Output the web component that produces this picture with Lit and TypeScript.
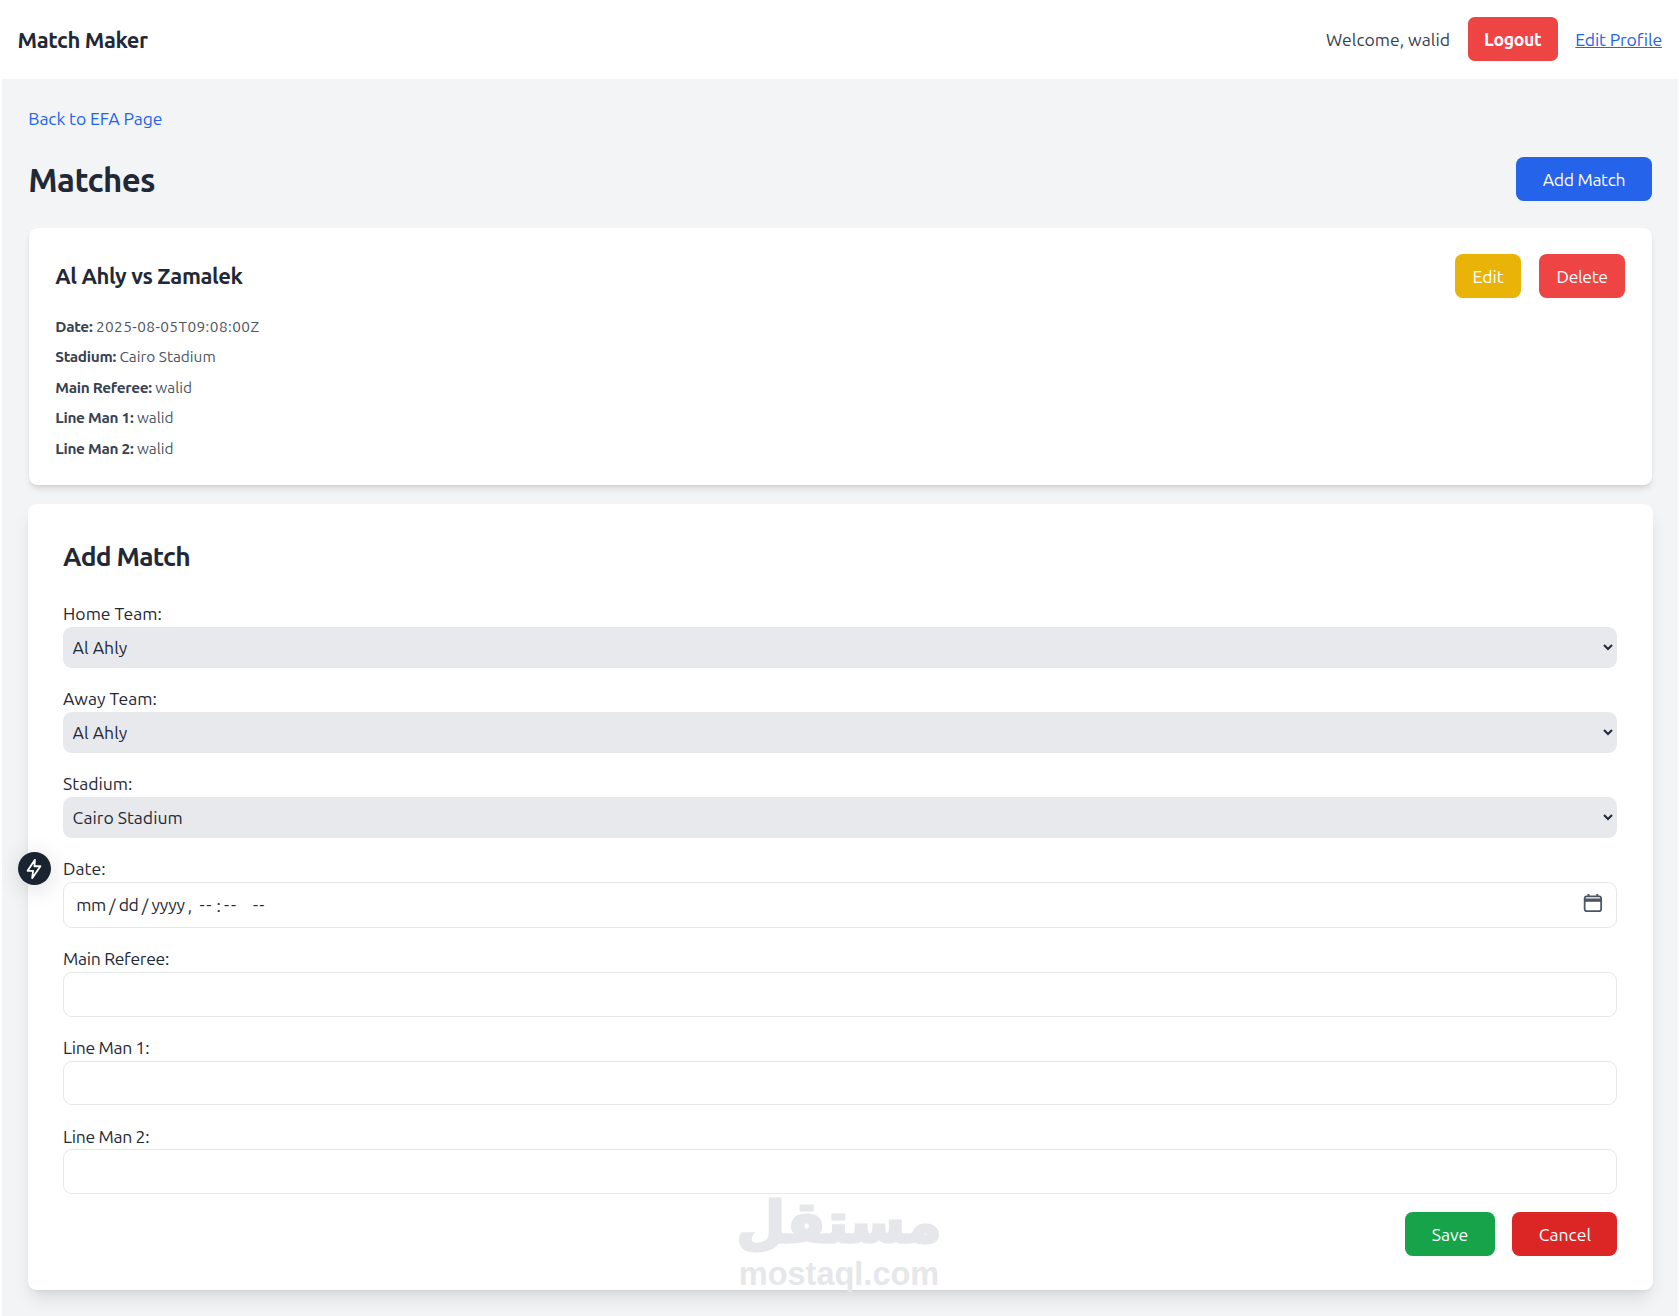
import { LitElement, html, css } from "lit";
import { customElement } from "lit/decorators.js";

@customElement("app-root")
export class AppRoot extends LitElement {
  static styles = css`
    :host { display: block; position: relative; background: #fff; font-family: "Ubuntu", "Noto Sans", sans-serif; color: #1f2937; }
    * { box-sizing: border-box; }
    .scaled { zoom: 1.1; font-size: 16px; line-height: 24px; }
    header { display: flex; align-items: center; justify-content: space-between; height: 72px; padding: 1px 15.5px 0 16px; background: #fff; }
    .logo { font-size: 20px; font-weight: 600; line-height: 28px; letter-spacing: -0.018em; color: #1f2937; }
    .user { display: flex; align-items: center; gap: 16px; color: #374151; }
    .btn { display: inline-block; border: none; border-radius: 6px; height: 40px; padding: 1px 16px 0; font: inherit; color: #fff; cursor: pointer; }
    .logout { margin-top: -2px; padding: 2px 15px 0; letter-spacing: -0.3px; }
    .wide { padding: 1px 24px 0; }
    .tight { letter-spacing: -0.3px; }
    .round { border-radius: 7px; }
    .bold { font-weight: 700; }
    .red { background: #ef4444; }
    .blue { background: #2563eb; }
    .yellow { background: #eab308; }
    .green { background: #16a34a; }
    .crimson { background: #dc2626; }
    .profile { color: #2563eb; text-decoration: underline; letter-spacing: -0.15px; }
    main { margin: 0 0.9px 0 1.8px; padding: 24px 24px 24px 24.5px; background: #f3f4f6; }
    .back { display: block; margin-left: -0.5px; color: #2563eb; text-decoration: none; margin-bottom: 23px; letter-spacing: -0.1px; }
    .row { display: flex; align-items: center; justify-content: space-between; }
    .title-row { margin-bottom: 24px; }
    h1 { margin: 0 0 0 -0.5px; padding-top: 1px; font-size: 30px; line-height: 35px; font-weight: 600; letter-spacing: -0.019em; color: #1f2937; }
    .card { background: #fff; border-radius: 8px; box-shadow: 0 4px 6px -1px rgba(0,0,0,.1), 0 2px 4px -2px rgba(0,0,0,.1); padding: 24px; margin-bottom: 17px; }
    .card-head { margin-bottom: 16px; }
    .actions .btn { padding-top: 2px; }
    h2 { margin: 0; font-size: 20px; line-height: 28px; font-weight: 600; letter-spacing: -0.018em; color: #1f2937; }
    .actions { display: flex; gap: 16px; }
    .detail { margin: 0 0 7.75px; font-size: 14px; line-height: 20px; color: #4b5563; }
    .detail:last-child { margin-bottom: -1px; }
    .detail b { font-weight: 600; letter-spacing: -0.02em; color: #374151; }
    .stamp { letter-spacing: 0.38px; }
    .form-card { margin: 0 -0.9px; padding: 32px 32px 31px; background: #fff; border-radius: 8px; box-shadow: 0 10px 15px -3px rgba(0,0,0,.1), 0 4px 6px -4px rgba(0,0,0,.1); }
    h3 { margin: 0 0 24px; font-size: 24px; line-height: 32px; font-weight: 600; letter-spacing: -0.027em; color: #1f2937; }
    .field { margin-bottom: 16px; }
    label { display: block; padding-top: 0.8px; height: 24px; color: #1f2937; }
    .narrow label { letter-spacing: -0.3px; }
    select, input { display: block; width: 100%; font: inherit; color: #1f2937; border-radius: 8px; }
    select { height: 37.2px; padding: 8px 11px 8px 5px; background: #e8e9ed; border: none; }
    input { height: 40.8px; padding: 8px; background: #fff; border: 1px solid #e5e7eb; }
    .date-wrap { position: relative; }
    .date { height: 42px; padding: 9px 8px 7px 10px; }
    .date::-webkit-calendar-picker-indicator { opacity: 0; }
    .date::-webkit-datetime-edit-text { padding: 0 2px; }
    .date::-webkit-datetime-edit-month-field,
    .date::-webkit-datetime-edit-day-field,
    .date::-webkit-datetime-edit-year-field { letter-spacing: -0.4px; }
    .date::-webkit-datetime-edit-hour-field,
    .date::-webkit-datetime-edit-minute-field { letter-spacing: 1.6px; }
    .date::-webkit-datetime-edit-ampm-field { margin-left: 6px; letter-spacing: 1.2px; }
    .cal { position: absolute; right: 13px; top: 10.5px; }
    .form-actions { display: flex; justify-content: flex-end; gap: 16px; }
    .form-actions .btn { padding-top: 2px; }
    .indicator { position: absolute; left: 17.5px; top: 852px; width: 33px; height: 33px; border-radius: 50%; background: #1a2330; display: flex; align-items: center; justify-content: center; box-shadow: 0 4px 24px rgba(0,0,0,.14); }
    .watermark { position: absolute; left: 738px; top: 1188px; width: 202px; display: flex; flex-direction: column; align-items: center; color: #e6e7ea; font-weight: 700; pointer-events: none; }
    .wm-ar { font-family: "DejaVu Sans", sans-serif; font-size: 56px; line-height: 70px; -webkit-text-stroke: 3px #e6e7ea; }
    .wm-en { font-family: "Liberation Sans", sans-serif; font-size: 32.5px; line-height: 32px; }
  `;

  private field(name: string, control: unknown, narrow = false) {
    return html`<div class="field ${narrow ? "narrow" : ""}"><label>${name}:</label>${control}</div>`;
  }

  private select(options: string[]) {
    return html`<select>${options.map((o) => html`<option>${o}</option>`)}</select>`;
  }

  render() {
    const teams = ["Al Ahly", "Zamalek"];
    const details = [
      ["Stadium", "Cairo Stadium"],
      ["Main Referee", "walid"],
      ["Line Man 1", "walid"],
      ["Line Man 2", "walid"],
    ];
    return html`
      <div class="scaled">
        <header>
          <div class="logo">Match Maker</div>
          <div class="user">
            <span>Welcome, walid</span>
            <button class="btn red bold logout">Logout</button>
            <a class="profile" href="#">Edit Profile</a>
          </div>
        </header>
        <main>
          <a class="back" href="#">Back to EFA Page</a>
          <div class="row title-row">
            <h1>Matches</h1>
            <button class="btn blue wide round tight">Add Match</button>
          </div>
          <section class="card">
            <div class="row card-head">
              <h2>Al Ahly vs Zamalek</h2>
              <div class="actions">
                <button class="btn yellow round">Edit</button>
                <button class="btn red round tight">Delete</button>
              </div>
            </div>
            <p class="detail"><b>Date:</b> <span class="stamp">2025-08-05T09:08:00Z</span></p>
            ${details.map(([k, v]) => html`<p class="detail"><b>${k}:</b> ${v}</p>`)}
          </section>
          <section class="form-card">
            <h3>Add Match</h3>
            ${this.field("Home Team", this.select(teams))}
            ${this.field("Away Team", this.select(teams))}
            ${this.field("Stadium", this.select(["Cairo Stadium"]))}
            ${this.field("Date", html`<div class="date-wrap">
              <input class="date" type="datetime-local" />
              <svg class="cal" width="18" height="18" viewBox="0 0 18 18" fill="none" stroke="#4b5563" stroke-width="1.6">
                <rect x="1.5" y="3" width="15" height="13.5" rx="2" />
                <path d="M1.5 6.5h15" stroke-width="3" />
                <path d="M5 1v2.5M13 1v2.5" stroke-width="1.8" />
              </svg>
            </div>`)}
            ${this.field("Main Referee", html`<input type="text" />`, true)}
            ${this.field("Line Man 1", html`<input type="text" />`, true)}
            ${this.field("Line Man 2", html`<input type="text" />`, true)}
            <div class="form-actions">
              <button class="btn green wide round">Save</button>
              <button class="btn crimson wide round">Cancel</button>
            </div>
          </section>
        </main>
      </div>
      <div class="indicator">
        <svg width="22" height="22" viewBox="0 0 24 24" fill="none" stroke="#fff" stroke-width="2" stroke-linejoin="round" stroke-linecap="round">
          <path d="M13 2 5 14h6l-1 8 9-13h-6.5z" />
        </svg>
      </div>
      <div class="watermark" aria-hidden="true">
        <span class="wm-ar">مستقل</span>
        <span class="wm-en">mostaql.com</span>
      </div>
    `;
  }
}
